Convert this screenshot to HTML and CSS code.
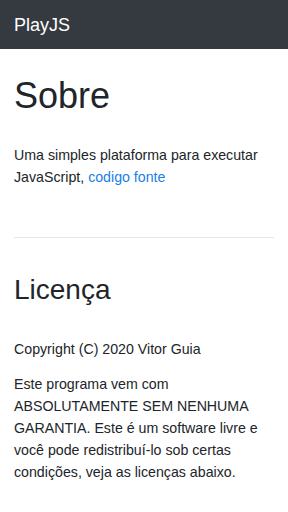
FILE: index.html
```html
<!DOCTYPE html>
<html>

<head>
    <meta charset='utf-8'>
    <title>PlayJS - Sobre</title>
    <meta name='viewport' content='width=device-width, initial-scale=1'>
    <link rel="stylesheet" href="styles.css">
</head>

<body>
    <nav class="navbar">PlayJS</nav>
    <div class="container">
        <h1>Sobre</h1>
        <p>Uma simples plataforma para executar JavaScript, <a href="#">codigo fonte</a></p>
        <hr>
        <h2>Licença</h2>
        <p>Copyright (C) 2020 Vitor Guia</p>
        <p>Este programa vem com ABSOLUTAMENTE SEM NENHUMA GARANTIA. Este é um software livre e você pode redistribuí-lo sob certas condições, veja as licenças abaixo.</p>
    </div>
</body>

</html>
```

FILE: styles.css
```css
* {
    margin: 0;
    padding: 0;
}

body {
    font-family: "Liberation Sans", Arial, sans-serif;
    color: #212529;
    background-color: #fff;
}

.navbar {
    background-color: #343a40;
    color: #fff;
    height: 48px;
    line-height: 48px;
    padding: 1px 14px 0;
    font-size: 18px;
}

.container {
    padding: 26px 14px;
}

h1,
h2 {
    font-weight: normal;
    line-height: 42px;
}

h1 {
    font-size: 36px;
    margin-bottom: 27px;
}

h2 {
    font-size: 28px;
    margin-top: 2px;
    margin-bottom: 27px;
}

p {
    font-size: 14.2px;
    line-height: 22px;
    margin-bottom: 13px;
}

a {
    color: #1a7fe6;
    text-decoration: none;
}

hr {
    border: none;
    border-top: 1px solid #e6e6e6;
    margin: 49px 0 31px;
}
```
